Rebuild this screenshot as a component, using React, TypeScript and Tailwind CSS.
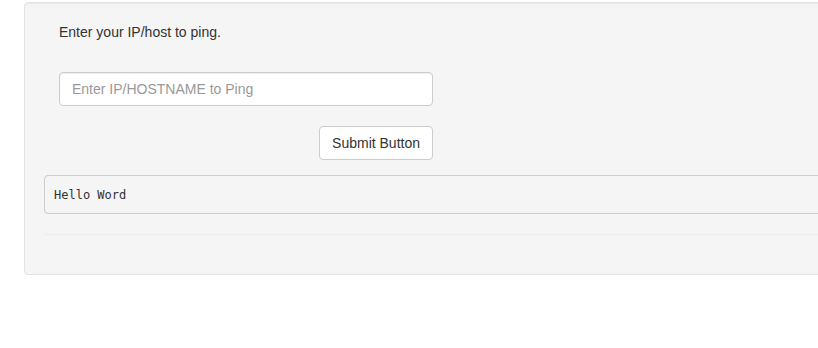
export default function App() {
  return (
    <div className="w-[818px] h-[348px] overflow-hidden bg-white text-[#333] text-[14px] leading-[20px]" style={{ fontFamily: '"Liberation Sans", Arial, sans-serif' }}>
      <div className="ml-[24px] mt-[2px] w-[820px] rounded border border-[#e3e3e3] bg-[#f5f5f5] pt-[19px] px-[19px] pb-[39px] shadow-[inset_0_1px_1px_rgba(0,0,0,0.05)]">
        <div className="pl-[15px]">
          <p className="h-[20px]">Enter your IP/host to ping.</p>
          <input
            type="text"
            placeholder="Enter IP/HOSTNAME to Ping"
            className="mt-[30px] block w-[374px] h-[34px] rounded border border-[#ccc] bg-white px-[12px] py-[6px] text-[14px] text-[#555] placeholder:text-[#999] shadow-[inset_0_1px_1px_rgba(0,0,0,0.075)] outline-none"
          />
          <div className="mt-[20px] flex w-[374px] justify-end">
            <button className="h-[34px] rounded border border-[#ccc] bg-white px-[12px] text-[14px] text-[#333]">
              Submit Button
            </button>
          </div>
        </div>
        <pre
          className="mt-[15px] rounded border border-[#ccc] bg-[#f5f5f5] px-[9px] pt-[10px] pb-[8px] text-[12px] leading-[19px] text-[#333]"
          style={{ fontFamily: '"DejaVu Sans Mono", "Liberation Mono", monospace' }}
        >
          Hello Word
        </pre>
        <hr className="mt-[20px] border-0 border-t border-[#eee]" />
      </div>
    </div>
  );
}
